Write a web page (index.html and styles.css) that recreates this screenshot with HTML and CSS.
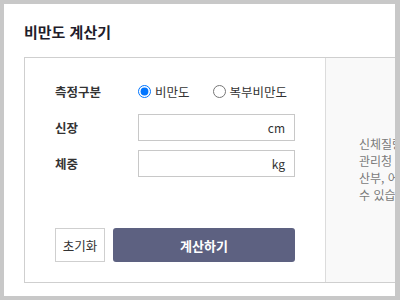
FILE: index.html
```html
<!DOCTYPE html>
<html lang="ko">
<head>
<meta charset="utf-8">
<link rel="stylesheet" href="styles.css">
</head>
<body>
<div class="panel">
  <h1 class="title">비만도 계산기</h1>
  <div class="box">
    <form class="form">
      <div class="row">
        <span class="label">측정구분</span>
        <div class="radios">
          <label class="radio"><input type="radio" name="type" checked><span>비만도</span></label>
          <label class="radio"><input type="radio" name="type"><span>복부비만도</span></label>
        </div>
      </div>
      <div class="row">
        <span class="label">신장</span>
        <div class="field"><span class="unit">cm</span></div>
      </div>
      <div class="row">
        <span class="label">체중</span>
        <div class="field"><span class="unit">kg</span></div>
      </div>
      <div class="actions">
        <button type="button" class="btn-reset">초기화</button>
        <button type="button" class="btn-calc">계산하기</button>
      </div>
    </form>
    <div class="info">
      <p class="line">신체질량지수(BMI)는 질병</p>
      <p class="line">관리청 기준에 따르며 임</p>
      <p class="line">산부, 어린이는 다르게 나올</p>
      <p class="line">수 있습니다.</p>
    </div>
  </div>
</div>
</body>
</html>
```
FILE: styles.css
```css
* { box-sizing: border-box; }
html, body { margin: 0; padding: 0; }
body {
  background: #c8c8c8;
  padding: 4px 5px 4px 4px;
  font-family: "Noto Sans CJK KR", "Noto Sans", sans-serif;
  color: #333;
}
.panel {
  width: 391px;
  height: 292px;
  background: #fff;
  overflow: hidden;
  padding: 18px 0 0 20px;
}
.title {
  margin: 0;
  font-size: 15px;
  line-height: 20px;
  font-weight: bold;
  color: #1f1d2b;
}
.box {
  margin-top: 15px;
  width: 420px;
  height: 226px;
  border: 1px solid #cfcfcf;
  display: flex;
}
.form {
  width: 300px;
  flex: none;
  padding: 20px 30px 0 30px;
  display: flex;
  flex-direction: column;
  gap: 9px;
}
.row {
  display: flex;
  align-items: center;
  height: 27px;
}
.label {
  width: 83px;
  flex: none;
  font-size: 12.5px;
  font-weight: bold;
  color: #333;
}
.radios {
  display: flex;
  align-items: center;
  gap: 23px;
}
.radio {
  display: flex;
  align-items: center;
  gap: 4px;
  font-size: 12.5px;
  color: #333;
}
.radio input {
  margin: 0;
  width: 13px;
  height: 13px;
}
.field {
  flex: 1;
  height: 27px;
  border: 1px solid #c8c8c8;
  display: flex;
  align-items: center;
  justify-content: flex-end;
  padding-right: 9px;
}
.unit {
  font-size: 12px;
  color: #333;
}
.actions {
  margin-top: 42px;
  display: flex;
  gap: 8px;
}
.btn-reset {
  width: 50px;
  height: 34px;
  border: 1px solid #cfcfcf;
  background: #fff;
  font-family: inherit;
  font-size: 12.5px;
  color: #333;
  padding: 0;
}
.btn-calc {
  flex: 1;
  height: 34px;
  border: none;
  border-radius: 3px;
  background: #5d6181;
  color: #fff;
  font-family: inherit;
  font-size: 13px;
  font-weight: bold;
  padding: 0;
}
.info {
  flex: 1;
  background: #f9f9f9;
  border-left: 1px solid #dcdcdc;
  padding-left: 33px;
  display: flex;
  flex-direction: column;
  justify-content: center;
  padding-bottom: 2px;
}
.line {
  margin: 0;
  font-size: 12px;
  line-height: 17px;
  color: #7a7a7a;
  white-space: nowrap;
}
```
